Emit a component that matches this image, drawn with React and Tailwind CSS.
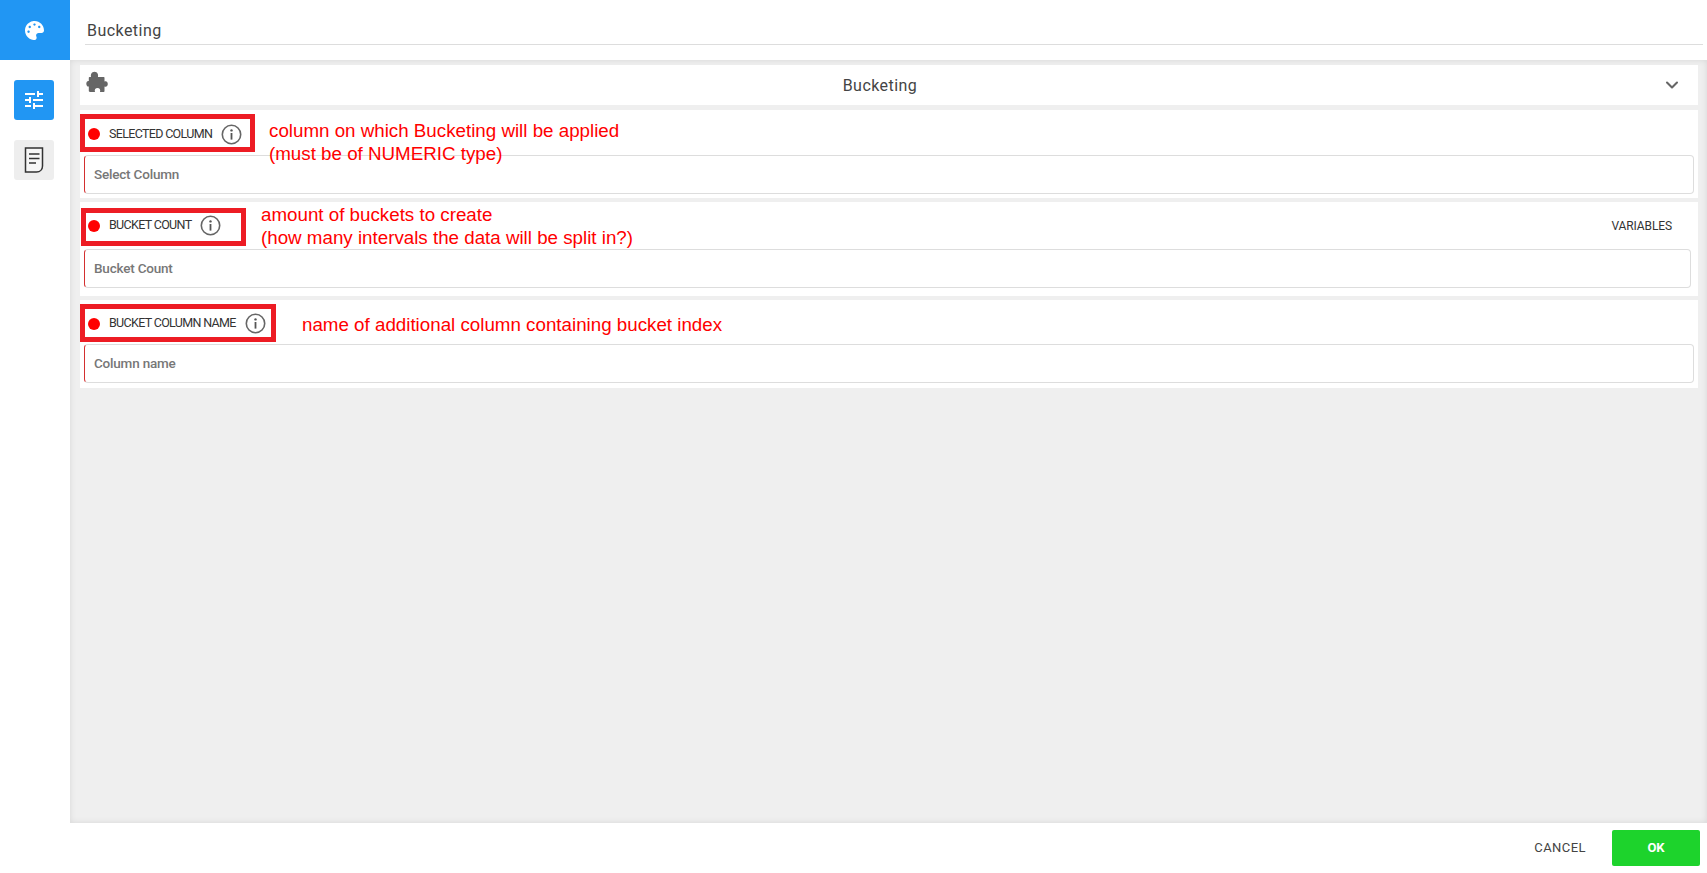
import React from "react";
import { ChevronDown } from "lucide-react";
import { FaPalette } from "react-icons/fa";
import { MdTune } from "react-icons/md";

const InfoIcon = () => (
  <svg width="21" height="21" viewBox="0 0 21 21" fill="none">
    <circle cx="10.5" cy="10.5" r="9.2" stroke="#666" strokeWidth="1.6" />
    <circle cx="10.5" cy="6.4" r="1.2" fill="#555" />
    <rect x="9.6" y="9" width="1.8" height="6.6" fill="#555" />
  </svg>
);

const DocIcon = () => (
  <svg width="20" height="26" viewBox="0 0 20 26" fill="none">
    <path d="M1.5 1h17v18c0 3.500-2.500 6-6 6h-11z" stroke="#333" strokeWidth="1.5" fill="#f6f6f6" />
    <path d="M5 7h10.500M5 11.500h10.500M5 16h7" stroke="#333" strokeWidth="1.6" />
  </svg>
);

const PuzzleIcon = () => (
  <svg width="22" height="22" viewBox="0 0 22 22" fill="#666">
    <path d="M5 6C4.500 3.500 5.500.7 8.500.7S12.500 3.500 12 6h5.500c.8 0 1 .4 1 1v3.500c2-.8 3.300.6 3.300 2.500s-1.500 3.300-3.300 2.500V20c0 .8-.4 1-1 1h-3.500c.8-2.500-.5-4-2.500-4s-3.300 1.500-2.500 4H4c-.8 0-1.200-.5-1.200-1.200v-4.300C1.500 16 .3 14.500.3 12.700S1.500 9.500 2.800 10V7c0-.7.400-1 1-1z" />
  </svg>
);

const Field = ({ label, placeholder, boxClass, noteClass, note, gapClass, labelRowClass, inputClass, action }) => (
  <section className={`relative bg-white ${gapClass}`}>
    <div className={`flex items-center pl-[8px] pr-[26px] ${labelRowClass}`}>
      <span className="h-[12px] w-[12px] rounded-full bg-[#ff0000]" />
      <span className="ml-[9px] font-['Roboto',sans-serif] text-[12.5px] tracking-[-0.67px] text-[#333]">{label}</span>
      <span className="ml-[9px] flex">
        <InfoIcon />
      </span>
      {action && <span className="ml-auto font-['Roboto',sans-serif] text-[12px] tracking-[-0.1px] text-[#333]">{action}</span>}
    </div>
    <div className={`ml-[4px] flex h-[39px] items-center rounded-[4px] border border-[#ddd] border-l-[#d32f2f] bg-white pl-[9px] ${inputClass}`}>
      <span className="font-['Roboto',sans-serif] text-[13.5px] font-medium tracking-[-0.2px] text-[#777]">{placeholder}</span>
    </div>
    <div className={`absolute border-[5px] border-[#ed1c24] ${boxClass}`} />
    <div className={`absolute whitespace-pre font-['Liberation_Sans',sans-serif] text-[18.75px] leading-[23px] text-[#ff0000] ${noteClass}`}>{note}</div>
  </section>
);

export default function App() {
  return (
    <div className="flex h-[873px] w-[1707px] overflow-hidden bg-white font-['Roboto',sans-serif]">
      <aside className="flex w-[70px] flex-col bg-white">
        <div className="flex h-[60px] w-full items-center justify-center bg-[#2196f3] pr-[2px] text-white">
          <FaPalette size={19} />
        </div>
        <button className="ml-[14px] mt-[20px] flex h-[40px] w-[40px] items-center justify-center rounded-[3px] bg-[#2196f3] text-white">
          <MdTune size={24} />
        </button>
        <button className="ml-[14px] mt-[20px] flex h-[40px] w-[40px] items-center justify-center rounded-[3px] bg-[#eeeeee]">
          <DocIcon />
        </button>
      </aside>

      <main className="flex flex-1 flex-col">
        <header className="h-[60px] bg-white pl-[15px] pr-[4px]">
          <div className="flex h-[45px] items-center border-b border-[#ddd] pl-[2px] pt-[17px] text-[16px] tracking-[0.45px] text-[#444]">
            Bucketing
          </div>
        </header>

        <div className="flex-1 bg-[#efefef] pl-[10px] pr-[9px] pt-[5px] shadow-[inset_0_0_6px_rgba(0,0,0,0.1)]">
          <div className="relative mb-[5px] flex h-[40px] items-center justify-center bg-white pr-[18px]">
            <span className="absolute left-[6px] top-[6px] flex">
              <PuzzleIcon />
            </span>
            <span className="pt-[1px] text-[16px] tracking-[0.45px] text-[#444]">Bucketing</span>
            <ChevronDown className="absolute right-[16px] top-[10px] text-[#666]" size={20} strokeWidth={2.5} />
          </div>

          <Field
            label="SELECTED COLUMN"
            placeholder="Select Column"
            note={"column on which Bucketing will be applied\n(must be of NUMERIC type)"}
            gapClass="mb-[4px] h-[88px]"
            labelRowClass="h-[45px] pt-[3px]"
            inputClass="mr-[4px]"
            boxClass="left-0 top-[4px] h-[38px] w-[175px]"
            noteClass="left-[189px] top-[9px]"
          />
          <Field
            label="BUCKET COUNT"
            placeholder="Bucket Count"
            action="VARIABLES"
            note={"amount of buckets to create\n(how many intervals the data will be split in?)"}
            gapClass="mb-[4px] h-[94px]"
            labelRowClass="h-[47px]"
            inputClass="mr-[7px]"
            boxClass="left-[1px] top-[6px] h-[38px] w-[165px]"
            noteClass="left-[181px] top-[1px]"
          />
          <Field
            label="BUCKET COLUMN NAME"
            placeholder="Column name"
            note="name of additional column containing bucket index"
            gapClass="h-[88px]"
            labelRowClass="h-[44px] pt-[3px]"
            inputClass="mr-[4px]"
            boxClass="left-0 top-[4px] h-[38px] w-[196px]"
            noteClass="left-[222px] top-[13px]"
          />
        </div>

        <footer className="flex h-[50px] items-center justify-end bg-white pr-[7px]">
          <button className="mr-[26px] text-[13px] tracking-[0.45px] text-[#444]">CANCEL</button>
          <button className="h-[36px] w-[88px] rounded-[2px] bg-[#1dd32c] text-[13px] font-bold text-white">OK</button>
        </footer>
      </main>
    </div>
  );
}
